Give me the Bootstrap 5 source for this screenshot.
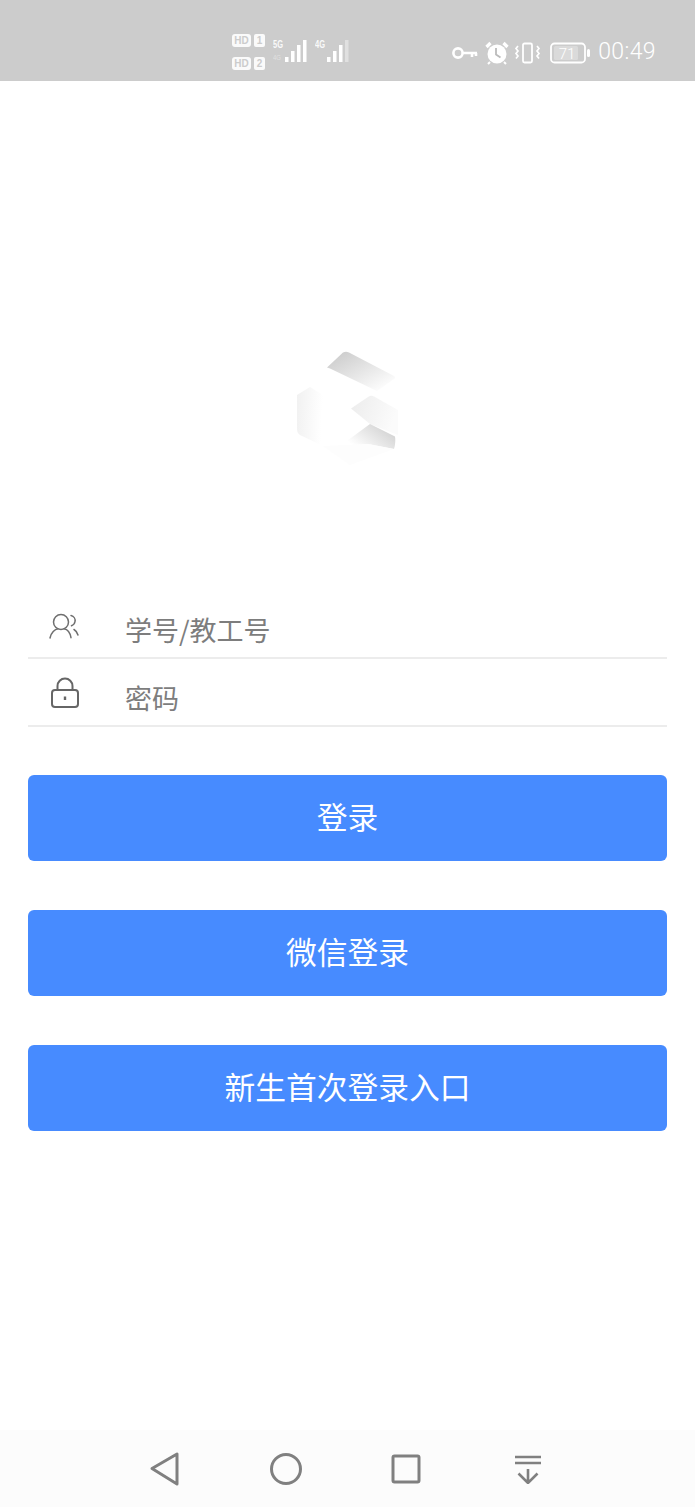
<!DOCTYPE html>
<html lang="zh-CN">
<head>
    <meta charset="UTF-8">
    <meta name="viewport" content="width=device-width, initial-scale=1">
    <title>登录</title>
    <link rel="stylesheet" href="https://cdn.jsdelivr.net/npm/bootstrap@5.3.0/dist/css/bootstrap.min.css">
    <script src="https://cdn.jsdelivr.net/npm/bootstrap@5.3.0/dist/js/bootstrap.bundle.min.js"></script>
    <style>
        html, body { height: 100%; }
        body { font-family: "Liberation Sans", "Noto Sans CJK SC", sans-serif; background: #fff; }
        .page-wrap { height: 1507px; }
        .status-bar { height: 81px; background: #ccc; color: #fff; padding: 24px 39px 0 231px; }
        .sim-block svg, .state-block svg { display: block; }
        .clock-text { font-family: "Roboto", sans-serif; font-size: 23px; font-weight: 300; letter-spacing: .4px; }
        .logo-box { padding-top: 268px; height: 515px; }
        .login-form { padding: 0 28px; }
        .field-row { height: 68px; border-bottom: 2px solid #ececec; }
        .field-row:first-child { height: 63px; }
        .field-icon { width: 97px; padding-left: 20px; }
        .field-row input { font-size: 27px; border: 0; border-radius: 0; padding: 6px 0 0; height: 44px; color: #555; background: transparent; box-shadow: none; font-family: "Noto Sans CJK SC", sans-serif; }
        .field-row + .field-row input { padding-top: 10px; }
        .field-row input:focus { box-shadow: none; }
        .field-row input::placeholder { color: #7d7d7d; opacity: 1; }
        .btn-login { height: 86px; margin-top: 49px; padding: 0 0 4px; background: #478bff; border: 0; border-radius: 6px; color: #fff; font-size: 30.75px; font-family: "Noto Sans CJK SC", sans-serif; }
        .btn-login:first-of-type { margin-top: 0; }
        .btn-login:hover { background: #3c80f5; color: #fff; }
        .btn-stack { padding-top: 48px; }
        .nav-bar { height: 77px; background: #fcfcfc; padding-left: 149px; }
        .nav-slot { width: 121px; }
        .nav-slot:nth-child(2) svg { margin-left: -1px; }
        .nav-slot:last-child svg { margin-left: 2px; }
    </style>
</head>
<body>
    <div class="page-wrap d-flex flex-column">

        <!-- barra de estado -->
        <div class="status-bar d-flex align-items-center justify-content-between">
            <div class="sim-block">
                <svg width="120" height="46" viewBox="0 0 120 46">
                    <rect x="1" y="4" width="19" height="13" rx="3" fill="#fff" opacity=".9"/>
                    <text x="10.500" y="14" font-size="10" font-weight="700" text-anchor="middle" fill="#ccc" font-family="Liberation Sans">HD</text>
                    <rect x="23" y="4" width="11" height="13" rx="2" fill="#fff" opacity=".9"/>
                    <text x="28.500" y="14" font-size="10" font-weight="700" text-anchor="middle" fill="#ccc" font-family="Liberation Sans">1</text>
                    <rect x="1" y="27" width="19" height="13" rx="3" fill="#fff" opacity=".9"/>
                    <text x="10.500" y="37" font-size="10" font-weight="700" text-anchor="middle" fill="#ccc" font-family="Liberation Sans">HD</text>
                    <rect x="23" y="27" width="11" height="13" rx="2" fill="#fff" opacity=".9"/>
                    <text x="28.500" y="37" font-size="10" font-weight="700" text-anchor="middle" fill="#ccc" font-family="Liberation Sans">2</text>
                    <text x="42" y="18" font-size="10" font-weight="700" fill="#fff" opacity=".9" font-family="Liberation Sans" textLength="10" lengthAdjust="spacingAndGlyphs">5G</text>
                    <text x="42" y="30" font-size="7" fill="#fff" opacity=".4" font-family="Liberation Sans" textLength="8" lengthAdjust="spacingAndGlyphs">4G</text>
                    <g fill="#fff">
                        <rect x="54" y="27" width="3.500" height="5"/><rect x="60" y="21" width="3.500" height="11"/><rect x="66" y="15" width="3.500" height="17"/><rect x="72" y="10" width="3.500" height="22"/>
                    </g>
                    <text x="84" y="18" font-size="10" font-weight="700" fill="#fff" opacity=".9" font-family="Liberation Sans" textLength="10" lengthAdjust="spacingAndGlyphs">4G</text>
                    <g fill="#fff">
                        <rect x="96" y="27" width="3.500" height="5"/><rect x="102" y="21" width="3.500" height="11"/><rect x="108" y="15" width="3.500" height="17"/>
                        <rect x="114" y="10" width="3.500" height="22" opacity=".4"/>
                    </g>
                </svg>
            </div>
            <div class="state-block d-flex align-items-center">
                <svg width="139" height="26" viewBox="0 0 139 26" fill="none" stroke="#fff">
                    <!-- chave -->
                    <circle cx="7" cy="13" r="4.600" stroke-width="2.600"/>
                    <path d="M11 13h15M21 13v4M25 13v3" stroke-width="2.600"/>
                    <!-- alarme -->
                    <circle cx="46" cy="14" r="9.500" fill="#fff" stroke="none"/>
                    <path d="M45 8v6.500l4.500 3" stroke="#bbb" stroke-width="1.800"/>
                    <path d="M35.500 7l4-4M56.500 7l-4-4" stroke-width="3.200"/>
                    <path d="M39 22l-2 2M53 22l2 2" stroke-width="2"/>
                    <!-- vibrar -->
                    <rect x="72" y="3.500" width="9" height="19" rx="1.500" stroke-width="1.800"/>
                    <path d="M67 6l-2 2.500 2 2.500-2 2.500 2 2.500-2 2.500M86 6l2 2.500-2 2.500 2 2.500-2 2.500 2 2.500" stroke-width="1.700"/>
                    <!-- bateria -->
                    <rect x="100" y="3.500" width="34" height="19" rx="3.500" stroke-width="1.800"/>
                    <rect x="103" y="6" width="24" height="14" rx="1.500" fill="#fff" opacity=".28" stroke="none"/>
                    <rect x="136" y="9" width="3" height="8" rx="1.500" fill="#fff" stroke="none"/>
                    <text x="116" y="18.500" font-size="15" text-anchor="middle" fill="#fff" stroke="none" font-family="Roboto" font-weight="300">71</text>
                </svg>
                <span class="clock-text ms-2">00:49</span>
            </div>
        </div>

        <!-- logo -->
        <div class="logo-box d-flex justify-content-center">
            <svg width="105" height="118" viewBox="295 350 105 118">
                <defs>
                    <linearGradient id="gradTop" x1="0.1" y1="0.1" x2="0.85" y2="0.85">
                        <stop offset="0" stop-color="#cdcdcd"/>
                        <stop offset="1" stop-color="#fbfbfb"/>
                    </linearGradient>
                    <linearGradient id="gradMid" x1="0" y1="0" x2="1" y2="0.3">
                        <stop offset="0" stop-color="#ececec"/>
                        <stop offset="1" stop-color="#fbfbfb"/>
                    </linearGradient>
                    <linearGradient id="gradLow" x1="0.2" y1="0.8" x2="0.95" y2="0.35">
                        <stop offset="0" stop-color="#ffffff"/>
                        <stop offset="1" stop-color="#d4d4d4"/>
                    </linearGradient>
                    <linearGradient id="gradLeft" x1="0" y1="0" x2="1" y2="0.1">
                        <stop offset="0" stop-color="#f1f1f1"/>
                        <stop offset="1" stop-color="#ffffff"/>
                    </linearGradient>
                </defs>
                <path d="M327 368.500L343 353.500Q346 352 349 353.500L394 377Q396 379 394 380L377 392L330 369.500Z" fill="url(#gradTop)"/>
                <path d="M351 409.500L368 398Q371 396 374 397.500L398 411V436L370 425Z" fill="url(#gradMid)"/>
                <path d="M370 425L395 437.500Q396 443 394 450L368 445L340 447Z" fill="url(#gradLow)"/>
                <path d="M297 396L310 388L323 396V447L300 436Q297 434 297 430Z" fill="url(#gradLeft)"/>
                <path d="M323 447L368 445L394 450L350 466Z" fill="#fdfdfd"/>
            </svg>
        </div>

        <!-- formulario -->
        <form class="login-form">
            <div>
                <div class="field-row d-flex align-items-center">
                    <div class="field-icon flex-shrink-0">
                        <svg class="d-block" width="32" height="30" viewBox="0 0 32 30" fill="none" stroke="#6f6f6f" stroke-width="1.500" stroke-linecap="round">
                            <circle cx="13" cy="10" r="7.500"/>
                            <path d="M2 26c1-5.500 5-8.800 8-9.300M16 16.700c3 .5 6 3.400 7 9"/>
                            <path d="M23 3.500c3 .8 4.500 3.500 4 6-.3 2-1.500 3.500-3.500 4.200M26 17.500c2 1.200 3.300 3 4 5.500"/>
                        </svg>
                    </div>
                    <input type="text" class="form-control flex-fill" placeholder="学号/教工号">
                </div>
                <div class="field-row d-flex align-items-center">
                    <div class="field-icon flex-shrink-0">
                        <svg class="d-block" width="32" height="32" viewBox="0 0 32 32" fill="none" stroke="#666" stroke-width="2">
                            <rect x="4" y="14" width="26" height="17" rx="3"/>
                            <path d="M9.500 14v-4a7.500 7.500 0 0 1 15 0v4"/>
                            <path d="M17 20.500v3.500" stroke-width="2.400"/>
                        </svg>
                    </div>
                    <input type="password" class="form-control flex-fill" placeholder="密码">
                </div>
            </div>
            <div class="btn-stack d-flex flex-column">
                <button type="button" class="btn btn-login">登录</button>
                <button type="button" class="btn btn-login">微信登录</button>
                <button type="button" class="btn btn-login">新生首次登录入口</button>
            </div>
        </form>

        <!-- navegacao -->
        <div class="nav-bar mt-auto d-flex align-items-center">
            <div class="nav-slot">
                <svg class="d-block" width="32" height="36" viewBox="0 0 32 36" fill="none" stroke="#808080" stroke-width="3" stroke-linejoin="round">
                    <path d="M3 17.500L28 3v30z"/>
                </svg>
            </div>
            <div class="nav-slot">
                <svg class="d-block" width="34" height="34" viewBox="0 0 34 34" fill="none" stroke="#808080" stroke-width="3">
                    <circle cx="17" cy="17" r="14.500"/>
                </svg>
            </div>
            <div class="nav-slot">
                <svg class="d-block" width="30" height="30" viewBox="0 0 30 30" fill="none" stroke="#808080" stroke-width="3" stroke-linejoin="round">
                    <rect x="2" y="2" width="26" height="26" rx="1.500"/>
                </svg>
            </div>
            <div class="nav-slot">
                <svg class="d-block" width="28" height="30" viewBox="0 0 28 30" fill="none" stroke="#808080" stroke-width="2.600">
                    <path d="M1 3h26M1 9h26M14 15v14M4.500 19.500L14 29l9.500-9.500"/>
                </svg>
            </div>
        </div>
    </div>
</body>
</html>
